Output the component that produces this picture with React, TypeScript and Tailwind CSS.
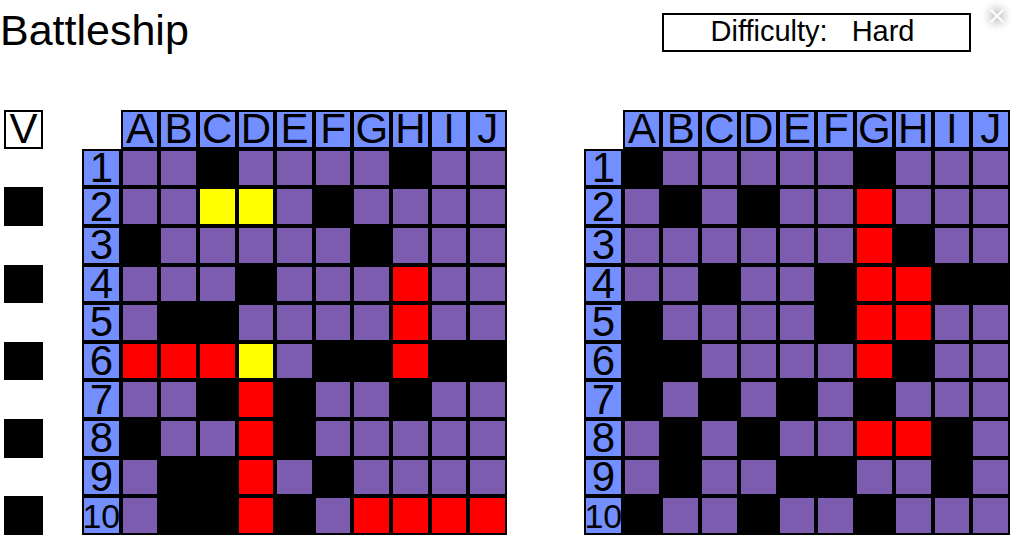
import React from "react";

const COLUMNS = ["A", "B", "C", "D", "E", "F", "G", "H", "I", "J"];

// "." open water, "#" miss, "R" hit, "Y" ship segment
const LEFT_ROWS = [
  "..#....#..",
  "..YY.#....",
  "#.....#...",
  "...#...R..",
  ".##....R..",
  "RRRY.##R##",
  "..#R#..#..",
  "#..R#.....",
  ".##R.#....",
  ".##R#.RRRR",
];

const RIGHT_ROWS = [
  "#.....#...",
  ".#.#..R...",
  "......R#..",
  "..#..#RR##",
  "#....#RR..",
  "##....R#..",
  "#.#.#.#...",
  ".#.#..RR#.",
  ".#..##..#.",
  "#..#..#...",
];

const CELL_COLORS: Record<string, string> = {
  ".": "bg-[#7b5cae]",
  "#": "bg-black",
  R: "bg-[#ff0000]",
  Y: "bg-[#ffff00]",
};

const HEADER_CELL =
  "flex min-h-0 min-w-0 items-center justify-center border-2 border-black bg-[#738fff] font-normal leading-[34px]";

function Board({ label, rows, className }: { label: string; rows: string[]; className: string }) {
  return (
    <table
      aria-label={label}
      className={`grid min-w-0 grid-cols-11 grid-rows-11 ${className}`}
    >
      <thead className="contents">
        <tr className="contents">
          <td />
          {COLUMNS.map((name) => (
            <th key={name} scope="col" className={`${HEADER_CELL} text-[42px]`}>
              {name}
            </th>
          ))}
        </tr>
      </thead>
      <tbody className="contents">
        {rows.map((row, r) => (
          <tr key={r} className="contents">
            <th scope="row" className={`${HEADER_CELL} ${r === 9 ? "text-[34px]" : "text-[42px]"}`}>
              {r + 1}
            </th>
            {row.split("").map((cell, c) => (
              <td key={c} className={`border-2 border-black ${CELL_COLORS[cell]}`} />
            ))}
          </tr>
        ))}
      </tbody>
    </table>
  );
}

export default function App() {
  return (
    <div className="relative bg-white pb-4 font-['Liberation_Sans',Arial,sans-serif] text-black">
      <header className="flex h-[110px] items-start justify-between pr-[42px]">
        <h1 className="pt-2 text-[43px] leading-[44px]">Battleship</h1>
        <button
          type="button"
          className="mt-[13px] flex h-[39px] w-[309px] items-start justify-center gap-6 border-2 border-black pr-2 text-[29px] leading-[32px]"
        >
          <span>Difficulty:</span>
          <span>Hard</span>
        </button>
      </header>

      <button
        type="button"
        aria-label="Close"
        className="absolute right-1 top-1 flex size-6 items-center justify-center"
      >
        <span className="absolute inset-1 rounded-full bg-black/25 blur-[5px]" />
        <svg viewBox="0 0 14 14" className="relative size-[14px]" fill="none" stroke="white" strokeWidth="2">
          <path d="M1 1 L13 13 M13 1 L1 13" />
        </svg>
      </button>

      <main className="flex pl-1 pr-[3px]">
        <div className="mr-[39px] grid w-[39px] shrink-0 grid-rows-11">
          <button
            type="button"
            className="flex min-h-0 items-center justify-center border-2 border-black bg-white text-[42px] leading-[34px]"
          >
            V
          </button>
          {[1, 2, 3, 4, 5].map((n) => (
            <React.Fragment key={n}>
              <span />
              <button type="button" aria-label={`Ship ${n}`} className="min-h-0 bg-black" />
            </React.Fragment>
          ))}
        </div>
        <Board label="Your board" rows={LEFT_ROWS} className="mr-[77px] aspect-square flex-[425_1_0%]" />
        <Board label="Opponent board" rows={RIGHT_ROWS} className="flex-[426_1_0%]" />
      </main>
    </div>
  );
}
